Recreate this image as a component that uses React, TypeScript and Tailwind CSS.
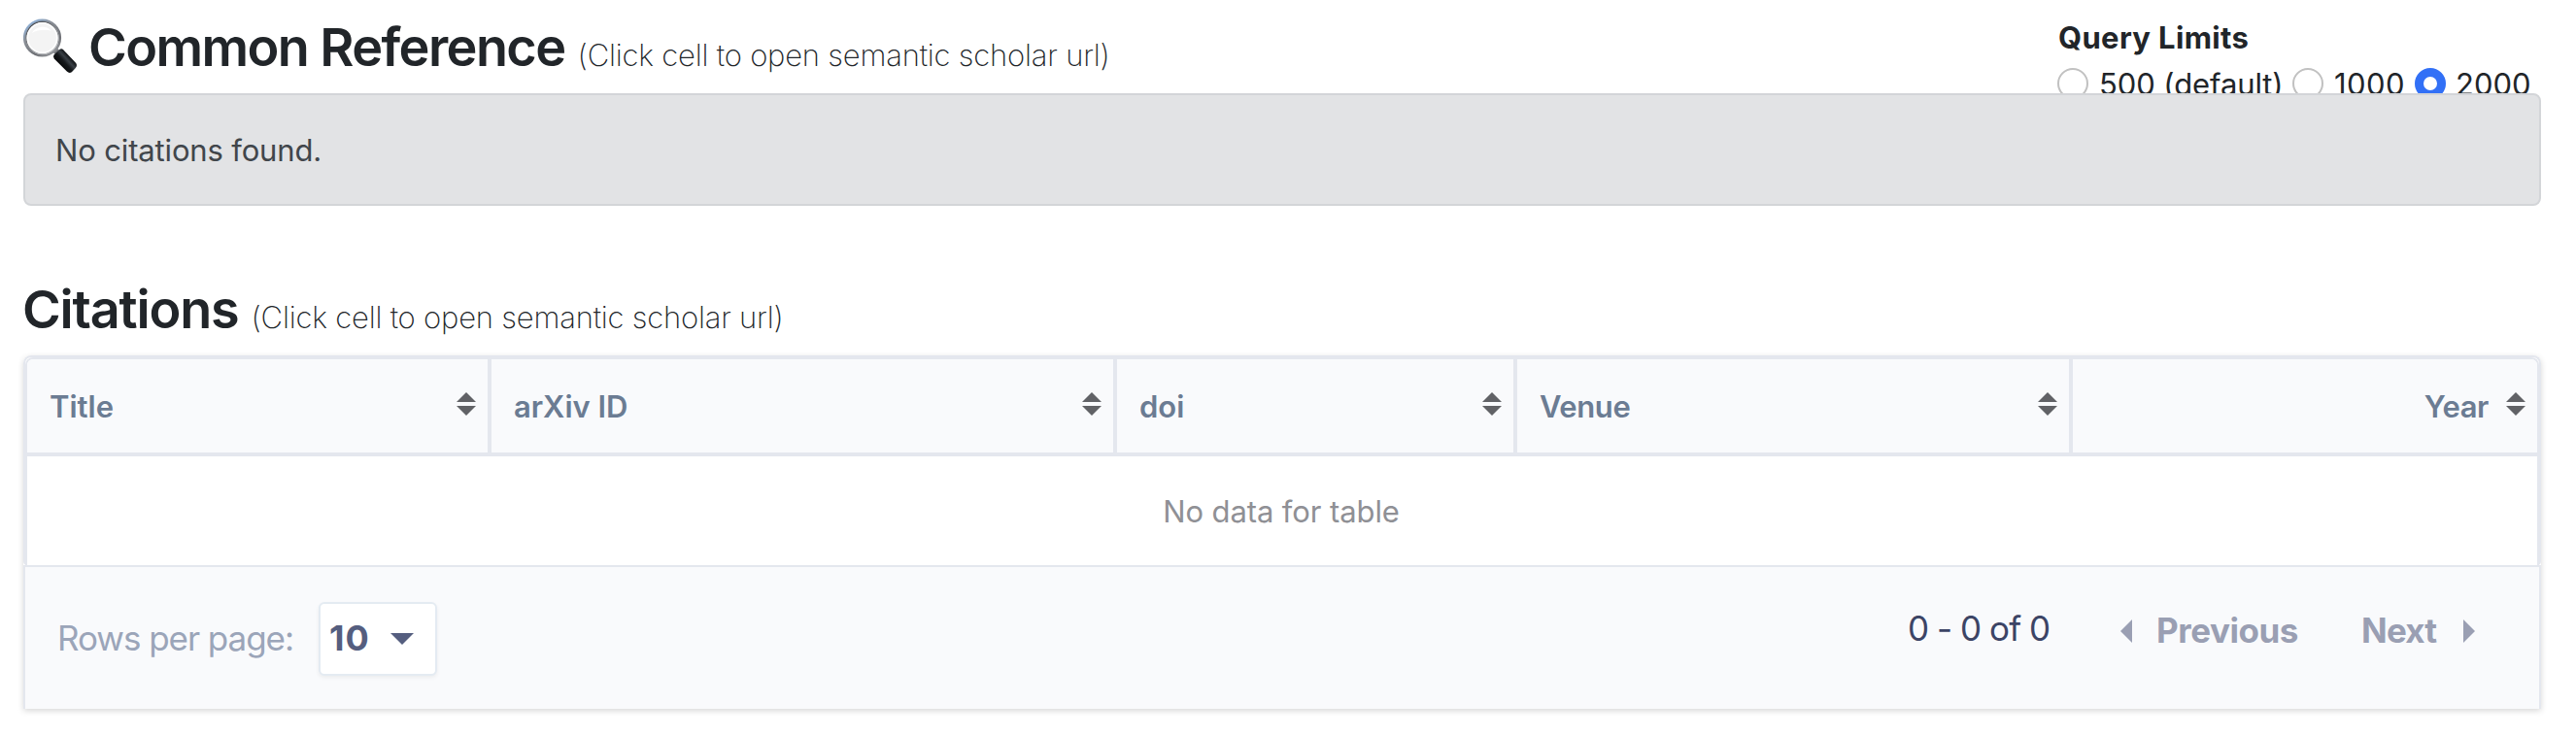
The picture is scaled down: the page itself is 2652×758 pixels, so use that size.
type Column = { label: string; cell: string; text: string };

const columns: Column[] = [
  { label: 'Title', cell: 'w-[478px] border-r-4', text: '' },
  { label: 'arXiv ID', cell: 'w-[644px] border-r-4', text: '' },
  { label: 'doi', cell: 'w-[412px] border-r-4', text: '' },
  { label: 'Venue', cell: 'w-[572px] border-r-4', text: 'tracking-[-0.4px]' },
  { label: 'Year', cell: 'w-[478px]', text: 'ml-auto mr-[18px] tracking-[-0.4px]' },
];

function MagnifierIcon() {
  return (
    <svg className="mt-[18px] h-[58px] w-[56px] shrink-0" viewBox="0 0 56 58" fill="none" aria-hidden="true">
      <defs>
        <linearGradient id="rim" x1="6" y1="2" x2="32" y2="38" gradientUnits="userSpaceOnUse">
          <stop offset="0" stopColor="#8fb8e6" />
          <stop offset="0.35" stopColor="#8b9098" />
          <stop offset="0.75" stopColor="#6d6f74" />
          <stop offset="1" stopColor="#9a9ca0" />
        </linearGradient>
        <linearGradient id="ring" x1="8" y1="4" x2="30" y2="38" gradientUnits="userSpaceOnUse">
          <stop offset="0" stopColor="#3f4247" />
          <stop offset="1" stopColor="#c9cbce" />
        </linearGradient>
        <linearGradient id="handle" x1="37" y1="50" x2="48" y2="40" gradientUnits="userSpaceOnUse">
          <stop offset="0" stopColor="#050607" />
          <stop offset="0.45" stopColor="#15181b" />
          <stop offset="0.7" stopColor="#3a4046" />
          <stop offset="1" stopColor="#0d0f11" />
        </linearGradient>
      </defs>
      <path d="M30 35.5 L34.5 31 L37 34 L33 38 Z" fill="#77797d" />
      <circle cx="19.5" cy="21" r="18.3" fill="#f4f4f4" stroke="url(#rim)" strokeWidth="2.6" />
      <circle cx="19.5" cy="21" r="16.6" stroke="url(#ring)" strokeWidth="1.3" />
      <circle cx="19.5" cy="21" r="15.2" stroke="#ffffff" strokeWidth="1.6" />
      <path d="M9 16 C12 9 24 7 29 14 C24 12 15 12 9 16 Z" fill="#ffffff" />
      <path
        d="M31.6 38.6 L37 33.2 Q39.2 31.4 41.4 33.4 L54 46.8 Q56 49.4 53.8 52 L49.8 56.2 Q47.4 58 44.8 55.6 L31.8 42.4 Q30.2 40.4 31.6 38.6 Z"
        fill="url(#handle)"
      />
    </svg>
  );
}

function SortIcon() {
  return (
    <svg className="-mt-1 h-[24px] w-[20px] shrink-0" viewBox="0 0 20 24" fill="#616266" aria-hidden="true">
      <path d="M10 0 L20 10 H0 Z" />
      <path d="M10 24 L20 14 H0 Z" />
    </svg>
  );
}

function Radio({ checked }: { checked?: boolean }) {
  return checked ? (
    <span className="-mt-0.5 size-8 shrink-0 rounded-full border-[9px] border-[#3270f6] bg-white" />
  ) : (
    <span className="-mt-0.5 size-8 shrink-0 rounded-full border-2 border-[#c1c1c1] bg-white" />
  );
}

export default function App() {
  return (
    <main className="h-[758px] w-[2652px] overflow-hidden bg-white pl-6 pr-9 font-['Inter',sans-serif] text-[31px] text-[#212529]">
      <header className="flex h-[96px] items-start overflow-hidden">
        <MagnifierIcon />
        <div className="ml-[11px] flex items-baseline pt-[16px] whitespace-nowrap">
          <h1 className="text-[54px] leading-[66px] font-semibold tracking-[-1.6px]">Common Reference</h1>
          <span className="ml-[13px] font-[250] tracking-[-0.2px]">(Click cell to open semantic scholar url)</span>
        </div>
        <div className="ml-auto w-[498px] pt-[15px] leading-[48px] whitespace-nowrap">
          <div className="ml-px font-bold tracking-[0.35px]">Query Limits</div>
          <div className="flex">
            <label className="flex w-[242px] items-center gap-[11px] tracking-[-0.1px]">
              <Radio />
              500 (default)
            </label>
            <label className="flex w-[126px] items-center gap-[11px] tracking-[0.4px]">
              <Radio />
              1000
            </label>
            <label className="flex items-center gap-[10px]">
              <Radio checked />
              2000
            </label>
          </div>
        </div>
      </header>

      <div className="flex h-[116px] items-center rounded-[8px] border-2 border-[#d3d5d8] bg-[#e2e3e5] pt-0.5 pl-[31px] tracking-[-0.15px] text-[#41464b]">
        No citations found.
      </div>

      <div className="mt-[74px] -ml-px flex h-[80px] items-baseline whitespace-nowrap">
        <h2 className="text-[54px] leading-[66px] font-semibold tracking-[-1.17px]">Citations</h2>
        <span className="ml-[13px] font-[250] tracking-[-0.2px]">(Click cell to open semantic scholar url)</span>
      </div>

      <section className="rounded-t-[8px] shadow-[0_2px_6px_rgba(0,0,0,0.16)]">
        <div className="rounded-t-[8px] rounded-b-[4px] border-x-2 border-t-2 border-[#e4e7ee] bg-white">
          <div className="rounded-t-[8px] border-x-2 border-t-2 border-[#e4e7ee]">
            <div className="flex h-[100px] overflow-hidden rounded-t-[6px] border-b-4 border-[#e4e7ee] bg-[#f9fafc]">
              {columns.map((c) => (
                <div
                  key={c.label}
                  className={`flex shrink-0 items-center justify-between border-[#e4e7ee] pr-3 pl-[23px] font-[640] text-[#6b7c93] ${c.cell}`}
                >
                  <span className={`pt-0.5 ${c.text}`}>{c.label}</span>
                  <SortIcon />
                </div>
              ))}
            </div>
            <div className="flex h-[112px] items-center justify-center pt-0.5 pr-0.5 tracking-[-0.1px] text-[#8f9095]">
              No data for table
            </div>
          </div>
        </div>
        <footer className="flex h-[148px] border-x-2 border-t-2 border-[#e4e7ee] bg-[#f9fafc] text-[35px] whitespace-nowrap">
          <div className="flex h-[148px] items-center pl-[33px] text-[#9ba5b9]">
            <span className="-mt-0.5 w-[269px] tracking-[-1.04px]">Rows per page:</span>
            <div className="flex h-[76px] w-[122px] items-center justify-between rounded-[6px] border-2 border-[#e4ebf2] bg-white pr-[22px] pl-[9px] font-bold text-[#555e7f] shadow-[0_2px_4px_rgba(0,0,0,0.06)]">
              <span className="-mt-0.5 text-[36px] tracking-[1px]">10</span>
              <svg className="h-[12px] w-[24px]" viewBox="0 0 24 12" fill="currentColor" aria-hidden="true">
                <path d="M0 0 H24 L12 12 Z" />
              </svg>
            </div>
          </div>
          <div className="ml-auto flex h-[132px] items-center pr-[66px] font-[650] text-[#9a9fb3]">
            <span className="-mt-1.5 w-[219px] font-normal tracking-[-0.95px] text-[#3c4465]">0 - 0 of 0</span>
            <svg className="h-[24px] w-[12px]" viewBox="0 0 12 24" fill="currentColor" aria-hidden="true">
              <path d="M12 0 V24 L0 12 Z" />
            </svg>
            <span className="-mt-0.5 ml-[25px] w-[211px] tracking-[-0.45px]">Previous</span>
            <span className="-mt-0.5 w-[105px] tracking-[-0.8px]">Next</span>
            <svg className="h-[24px] w-[12px]" viewBox="0 0 12 24" fill="currentColor" aria-hidden="true">
              <path d="M0 0 V24 L12 12 Z" />
            </svg>
          </div>
        </footer>
      </section>
    </main>
  );
}
